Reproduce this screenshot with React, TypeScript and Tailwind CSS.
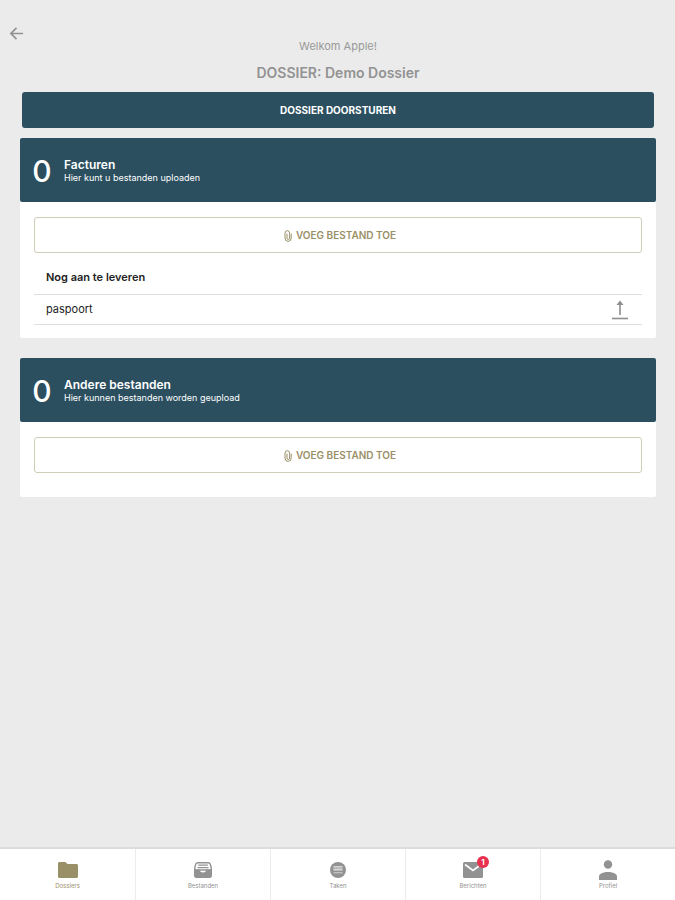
import React from "react";
import clsx from "clsx";

type IconProps = { className?: string };

const BackIcon = ({ className }: IconProps): JSX.Element => (
  <svg viewBox="0 0 16 16" fill="none" stroke="currentColor" strokeWidth="1.8" className={className}>
    <path d="M15 8H2M8 2L2 8l6 6" />
  </svg>
);

const ClipIcon = ({ className }: IconProps): JSX.Element => (
  <svg viewBox="0 0 8 12" fill="none" stroke="currentColor" strokeWidth="1" strokeLinecap="round" className={className}>
    <path d="M7.2 4v4a3.1 3.4 0 0 1-6.2 0V3.2a2.3 2.5 0 0 1 4.6 0v4.9a1.3 1.4 0 0 1-2.6 0V4" />
  </svg>
);

const UploadIcon = ({ className }: IconProps): JSX.Element => (
  <svg viewBox="0 0 16 20" fill="none" stroke="currentColor" className={className}>
    <path d="M8 15V2" strokeWidth="1.6" />
    <path d="M8 0.5L11.5 5h-7z" fill="currentColor" stroke="none" />
    <path d="M0 18.500h16" strokeWidth="1.600" />
  </svg>
);

const FolderIcon = ({ className }: IconProps): JSX.Element => (
  <svg viewBox="0 0 20 16" fill="currentColor" className={className}>
    <path d="M1.5 0h5.2c.6 0 1 .2 1.400.6L9.300 2h9.200c.8 0 1.500.6 1.500 1.500v11c0 .9-.7 1.500-1.500 1.500h-17C.7 16 0 15.400 0 14.500v-13C0 .7.7 0 1.500 0z" />
  </svg>
);

const TrayIcon = ({ className }: IconProps): JSX.Element => (
  <svg viewBox="0 0 18 16" className={className}>
    <path d="M4 .7h10c1.200 0 2 .5 2.300 1.600L17.300 6v2H.7V6l1-3.700C2 1.200 2.800.7 4 .7z" fill="#fff" stroke="currentColor" strokeWidth="1.400" />
    <path d="M4.200 3.200h9.600M3.500 5.600h11" stroke="currentColor" strokeWidth="1.200" />
    <path d="M0 7.500h5.500c.3 1.900 1.600 3 3.500 3s3.200-1.100 3.500-3H18v6.300c0 1.200-.9 2.200-2.200 2.200H2.200C.9 16 0 15 0 13.800z" fill="currentColor" />
  </svg>
);

const TaskIcon = ({ className }: IconProps): JSX.Element => (
  <svg viewBox="0 0 16 16" className={className}>
    <circle cx="8" cy="8" r="8" fill="currentColor" />
    <rect x="3.500" y="4.500" width="9" height="4.500" fill="#bbb" />
    <path d="M3.500 4.500h9M3.500 7.500h9M3.500 10.800h9" stroke="#d5d5d5" strokeWidth="1" />
  </svg>
);

const MailIcon = ({ className }: IconProps): JSX.Element => (
  <svg viewBox="0 0 20 16" className={className}>
    <rect width="20" height="16" rx="1.500" fill="currentColor" />
    <path d="M2 2.500L10 8.500l8-6" fill="none" stroke="#fff" strokeWidth="1.600" />
  </svg>
);

const PersonIcon = ({ className }: IconProps): JSX.Element => (
  <svg viewBox="0 0 18 20" fill="currentColor" className={className}>
    <circle cx="9" cy="4.500" r="4.200" />
    <path d="M0 20v-3.500C0 13.500 4.500 12 9 12s9 1.500 9 4.500V20z" />
  </svg>
);

interface DossierCardProps {
  count: number;
  title: string;
  description: string;
}

const DossierCard = ({
  count,
  title,
  description,
  children,
}: React.PropsWithChildren<DossierCardProps>): JSX.Element => {
  return (
    <section className="rounded-xs bg-white">
      <header className="flex h-16 items-center gap-3 rounded-xs bg-[#2b4f5f] pt-px pl-3 text-white">
        <span className="w-5 text-center text-[30px] leading-8 font-medium">{count}</span>
        <div className="flex flex-col pt-px">
          <h2 className="text-[12px] leading-[14px] font-semibold">{title}</h2>
          <p className="text-[9px] leading-3">{description}</p>
        </div>
      </header>
      <div className="px-[14px] pt-[15px] pb-[13px]">
        <button className="flex h-9 w-full items-center justify-center gap-1 rounded-[3px] border border-[#cfccb8] pt-px pl-1 text-[10px] font-semibold text-[#9a9067]">
          <ClipIcon className="h-3 w-2" />
          VOEG BESTAND TOE
        </button>
        {children}
      </div>
    </section>
  );
};

const tabs = [
  { label: "Dossiers", Icon: FolderIcon, size: "h-4 w-5", active: true, badge: 0 },
  { label: "Bestanden", Icon: TrayIcon, size: "h-4 w-[18px]", active: false, badge: 0 },
  { label: "Taken", Icon: TaskIcon, size: "h-4 w-4", active: false, badge: 0 },
  { label: "Berichten", Icon: MailIcon, size: "h-4 w-5", active: false, badge: 1 },
  { label: "Profiel", Icon: PersonIcon, size: "h-5 w-[18px]", active: false, badge: 0 },
];

const TabBar: React.FC = () => {
  return (
    <nav className="grid grid-cols-5 border-t-2 border-[#dcdcdc] bg-white">
      {tabs.map(({ label, Icon, size, active, badge }) => (
        <a
          key={label}
          href="#"
          className={clsx(
            "flex h-[51px] flex-col items-center border-l border-[#ececec] pt-[11px] first:border-l-0",
            active ? "text-[#9a9067]" : "text-[#929292]"
          )}
        >
          <span className="relative flex h-5 items-center">
            <Icon className={size} />
            {badge > 0 && (
              <span className="absolute -top-1 -right-1.5 h-3 w-3 rounded-full bg-[#e8304f] text-center text-[8px] leading-3 font-bold text-white">
                {badge}
              </span>
            )}
          </span>
          <span className="text-[6px] leading-3">{label}</span>
        </a>
      ))}
    </nav>
  );
};

const App: React.FC = () => {
  return (
    <div className="flex min-h-screen flex-col bg-[#ebebeb] font-['Inter',sans-serif] text-[#222]">
      <main className="relative flex-1 pt-[38px] pr-[19px] pl-5">
        <button aria-label="Terug" className="absolute top-[26px] left-[9px] text-[#929292]">
          <BackIcon className="h-[15px] w-[15px]" />
        </button>
        <p className="text-center text-[11px] leading-4 text-[#999]">Welkom Apple!</p>
        <h1 className="mt-2 text-center text-[14px] leading-[22px] font-semibold text-[#929292]">
          DOSSIER: Demo Dossier
        </h1>
        <div className="mt-2 px-0.5">
          <button className="block h-9 w-full rounded-[3px] bg-[#2b4f5f] text-[10px] font-bold text-white">
            DOSSIER DOORSTUREN
          </button>
        </div>

        <div className="mt-[10px] flex flex-col gap-5">
          <DossierCard
            count={0}
            title="Facturen"
            description="Hier kunt u bestanden uploaden"
          >
            <h3 className="px-3 pt-4 pb-[9px] text-[11px] leading-4 font-semibold">
              Nog aan te leveren
            </h3>
            <div className="flex h-[31px] items-center justify-between border-y border-[#dedede] pr-[14px] pl-3 text-[11px]">
              <span>paspoort</span>
              <button aria-label="Upload paspoort" className="text-[#8e8e8e]">
                <UploadIcon className="h-5 w-4" />
              </button>
            </div>
          </DossierCard>
          <DossierCard
            count={0}
            title="Andere bestanden"
            description="Hier kunnen bestanden worden geupload"
          >
            <div className="h-[11px]" />
          </DossierCard>
        </div>
      </main>
      <TabBar />
    </div>
  );
};

export default App;
